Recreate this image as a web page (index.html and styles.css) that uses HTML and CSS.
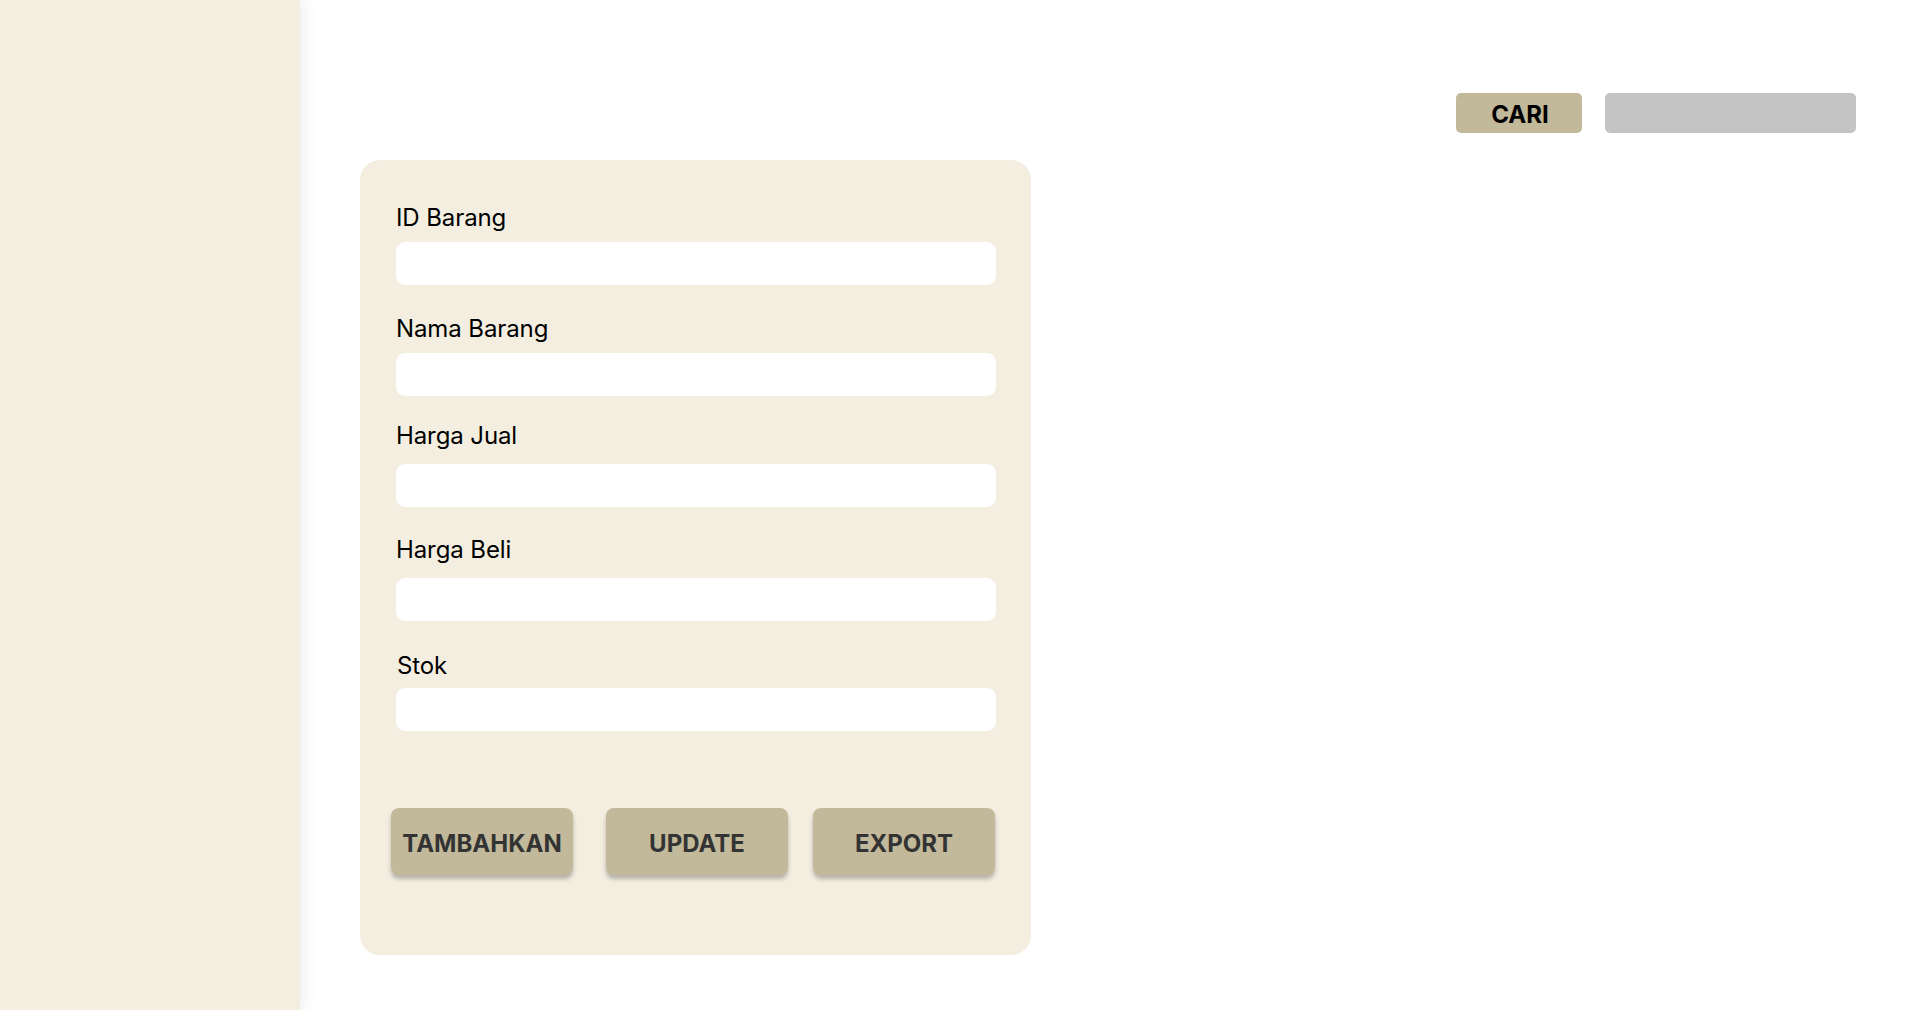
FILE: index.html
```html
<!DOCTYPE html>
<html lang="id">
<head>
<meta charset="utf-8">
<title>Data Barang</title>
<link rel="stylesheet" href="styles.css">
</head>
<body>
<div class="app">
  <aside class="sidebar"></aside>
  <main class="main">
    <div class="topbar">
      <button class="btn-search">CARI</button>
      <input class="search-input" type="text">
    </div>
    <form class="card">
      <div class="field f1">
        <label class="label">ID Barang</label>
        <input class="input" type="text">
      </div>
      <div class="field f2">
        <label class="label">Nama Barang</label>
        <input class="input" type="text">
      </div>
      <div class="field f3">
        <label class="label">Harga Jual</label>
        <input class="input" type="text">
      </div>
      <div class="field f4">
        <label class="label">Harga Beli</label>
        <input class="input" type="text">
      </div>
      <div class="field f5">
        <label class="label label-stok">Stok</label>
        <input class="input" type="text">
      </div>
      <div class="actions">
        <button type="button" class="btn btn-add">TAMBAHKAN</button>
        <button type="button" class="btn btn-update">UPDATE</button>
        <button type="button" class="btn btn-export">EXPORT</button>
      </div>
    </form>
  </main>
</div>
</body>
</html>
```
FILE: styles.css
```css
* { box-sizing: border-box; }
html, body {
  margin: 0;
  padding: 0;
  background: #ffffff;
  font-family: Inter, "Noto Sans", sans-serif;
}
.app {
  display: flex;
  min-height: 1010px;
}
.sidebar {
  width: 300px;
  flex: none;
  background: #f4eee1;
  box-shadow: 4px 0 14px rgba(0, 0, 0, 0.07);
  position: relative;
  z-index: 1;
}
.main {
  flex: 1;
  padding-left: 60px;
}
.topbar {
  display: flex;
  justify-content: flex-end;
  gap: 23px;
  padding-top: 93px;
  padding-right: 64px;
}
.btn-search {
  width: 126px;
  height: 40px;
  border: none;
  border-radius: 5px;
  background: #c2b99b;
  color: #000;
  font-family: Inter, sans-serif;
  font-weight: 700;
  font-size: 24px;
  padding: 2px 0 0 2px;
}
.search-input {
  width: 251px;
  height: 40px;
  border: none;
  border-radius: 5px;
  background: #c4c4c4;
  outline: none;
}
.card {
  margin-top: 27px;
  width: 671px;
  height: 795px;
  background: #f4eee1;
  border-radius: 20px;
  padding: 43px 35px 0 36px;
  display: flex;
  flex-direction: column;
}
.field {
  display: flex;
  flex-direction: column;
}
.label {
  font-size: 24px;
  line-height: 29px;
  color: #000;
  font-weight: 400;
  letter-spacing: -0.1px;
}
.label-stok { padding-left: 1px; }
.input {
  width: 600px;
  height: 43px;
  border: none;
  border-radius: 9px;
  background: #ffffff;
  outline: none;
}
.f1 { gap: 10px; }
.f2 { gap: 10px; margin-top: 29px; }
.f3 { gap: 14px; margin-top: 25px; }
.f4 { gap: 14px; margin-top: 28px; }
.f5 { gap: 8px; margin-top: 30px; }
.actions {
  display: flex;
  margin-top: 77px;
  margin-left: -5px;
}
.btn {
  width: 182px;
  height: 67px;
  border: none;
  border-radius: 8px;
  background: #c2b99b;
  color: #333333;
  font-family: Inter, sans-serif;
  font-weight: 700;
  font-size: 24px;
  padding: 4px 0 0 0;
  box-shadow: 0 4px 4px rgba(0, 0, 0, 0.25);
}
.btn-update { margin-left: 33px; }
.btn-export { margin-left: 25px; }
```
